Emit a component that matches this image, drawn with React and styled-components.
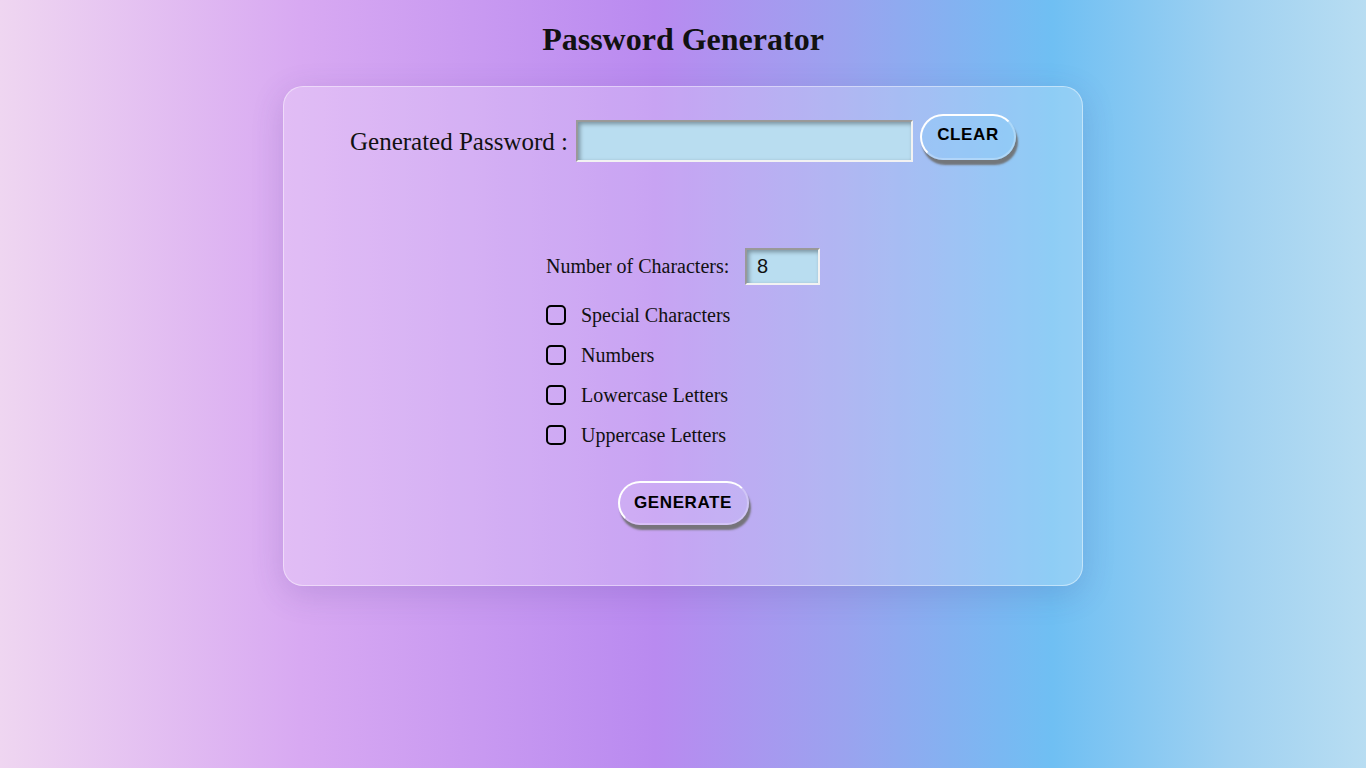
import React, { useState } from 'react'
import styled, { createGlobalStyle } from 'styled-components'

const GlobalStyle = createGlobalStyle`
  html, body {
    margin: 0;
    min-height: 100%;
  }
  body {
    min-height: 768px;
    font-family: 'Liberation Serif', 'Times New Roman', serif;
    color: #111;
    background: linear-gradient(
      90deg,
      #efd6f1 0%,
      #d8a9f2 22%,
      #b98af0 48%,
      #9aa3ef 62%,
      #6fbff3 77%,
      #9fd1f1 90%,
      #b8ddf2 100%
    );
  }
`

const Page = styled.div`
  display: flex;
  flex-direction: column;
  align-items: center;
  padding-top: 21px;
`

const Title = styled.h1`
  margin: 0 0 28px;
  font-size: 32px;
  line-height: 37px;
  font-weight: bold;
`

const Card = styled.div`
  box-sizing: border-box;
  width: 800px;
  height: 500px;
  padding: 33px 0 0;
  border-radius: 20px;
  background: rgba(255, 255, 255, 0.22);
  border: 1px solid rgba(255, 255, 255, 0.45);
  box-shadow: 0 8px 32px rgba(80, 60, 140, 0.18);
  display: flex;
  flex-direction: column;
  align-items: center;
`

const PasswordRow = styled.div`
  display: flex;
  align-items: center;
  gap: 7px;
`

const PasswordLabel = styled.label`
  font-size: 25px;
  margin-right: 1px;
  padding-top: 2px;
`

const Field = styled.input`
  box-sizing: border-box;
  width: ${(p) => p.$width}px;
  height: ${(p) => p.$height}px;
  padding: 0 10px;
  background: #b9ddf0;
  border: 2px solid;
  border-color: #999 #f2f2f2 #f2f2f2 #999;
  box-shadow: inset 2px 2px 4px rgba(0, 0, 0, 0.35);
  font-family: 'Liberation Sans', Arial, sans-serif;
  font-size: 20px;
  color: #111;
  outline: none;
`

const PillButton = styled.button`
  box-sizing: border-box;
  height: ${(p) => p.$height || 44}px;
  padding: 0 12px;
  border-radius: 24px;
  border: 2px solid;
  border-color: #fff rgba(255, 255, 255, 0.25) rgba(255, 255, 255, 0.25) #fff;
  background: rgba(255, 255, 255, 0.08);
  box-shadow: 2px 5px 2px rgba(110, 110, 110, 0.9);
  font-family: 'Liberation Sans', Arial, sans-serif;
  font-weight: bold;
  font-size: 17px;
  letter-spacing: 0.6px;
  color: #000;
  cursor: pointer;
`

const ClearButton = styled(PillButton)`
  align-self: flex-start;
  margin-top: -6px;
  width: 96px;
  height: 46px;
  padding-bottom: 4px;
  background: rgba(140, 205, 250, 0.35);
`

const Options = styled.div`
  margin-top: 86px;
  width: 274px;
  display: flex;
  flex-direction: column;
`

const LengthRow = styled.div`
  display: flex;
  align-items: center;
  justify-content: space-between;
  margin-bottom: 10px;
  font-size: 20px;
`

const CheckRow = styled.label`
  display: flex;
  align-items: center;
  gap: 15px;
  height: 40px;
  font-size: 20px;
`

const Box = styled.input.attrs({ type: 'checkbox' })`
  appearance: none;
  margin: 0;
  width: 20px;
  height: 20px;
  border: 2px solid #000;
  border-radius: 5px;
  background: transparent;
  box-sizing: border-box;

  &:checked {
    background: #000;
  }
`

const GenerateButton = styled(PillButton)`
  margin-top: 26px;
  width: 131px;
  height: 44px;
`

const options = [
  'Special Characters',
  'Numbers',
  'Lowercase Letters',
  'Uppercase Letters',
]

export default function App() {
  const [length, setLength] = useState('8')
  const [password, setPassword] = useState('')

  return (
    <>
      <GlobalStyle />
      <Page>
        <Title>Password Generator</Title>
        <Card>
          <PasswordRow>
            <PasswordLabel>Generated Password :</PasswordLabel>
            <Field $width={337} $height={42} value={password} readOnly />
            <ClearButton onClick={() => setPassword('')}>CLEAR</ClearButton>
          </PasswordRow>

          <Options>
            <LengthRow>
              Number of Characters:
              <Field
                $width={75}
                $height={37}
                value={length}
                onChange={(e) => setLength(e.target.value)}
              />
            </LengthRow>
            {options.map((name) => (
              <CheckRow key={name}>
                <Box />
                {name}
              </CheckRow>
            ))}
          </Options>

          <GenerateButton>GENERATE</GenerateButton>
        </Card>
      </Page>
    </>
  )
}
